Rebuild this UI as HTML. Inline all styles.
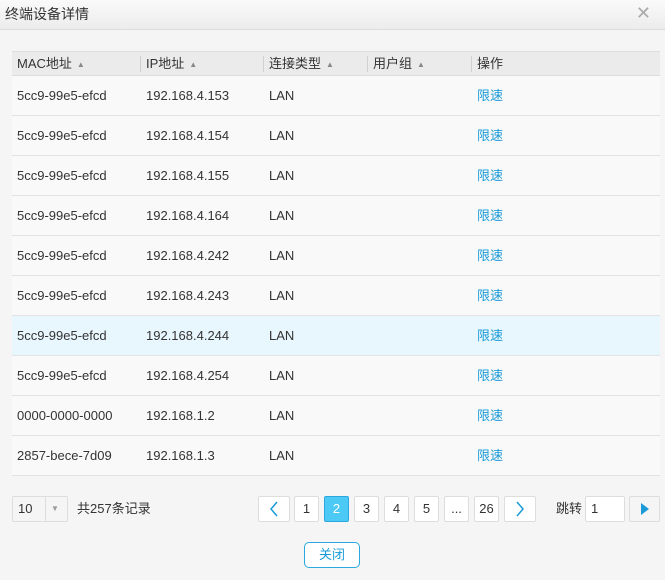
<!DOCTYPE html>
<html><head><meta charset="utf-8"><style>
*{box-sizing:border-box;margin:0;padding:0}
body{width:665px;height:580px;background:#f5f5f5;font-family:"Liberation Sans","Noto Sans CJK SC",sans-serif;font-size:13px;color:#333;position:relative;overflow:hidden}
.hd{position:absolute;left:0;top:0;width:665px;height:30px;background:linear-gradient(#fafafa,#ececec);border-bottom:1px solid #ddd}
.hd .t{position:absolute;left:5px;top:0;line-height:28px;font-size:14px;color:#333}
.hd .x{position:absolute;right:14px;top:0;line-height:26px;font-size:18px;color:#aaa}
.tbl{position:absolute;left:12px;top:51px;width:648px}
.th{height:25px;background:#ebebeb;border-top:1px solid #ddd;border-bottom:1px solid #ddd;position:relative}
.th span{position:absolute;top:0;line-height:23px;font-size:13px}
.th i{position:absolute;top:4px;width:1px;height:16px;background:#d0d0d0}
.tri{font-size:8px;color:#888;margin-left:5px;vertical-align:1px;font-weight:normal}
.r{height:40px;background:#f9f9f9;border-bottom:1px solid #e3e3e3;position:relative}
.r.h{background:#e8f6fd}
.r span,.r a{position:absolute;top:0;line-height:39px}
.r a{left:465px;color:#1a9bd7;text-decoration:none}
.b{position:absolute;top:496px;height:26px;border:1px solid #ddd;background:#fff;border-radius:2px;text-align:center;line-height:24px;font-size:13px;color:#333}
.b svg{position:absolute;left:50%;top:50%;transform:translate(-50%,-50%)}
.lbl{position:absolute;top:496px;line-height:26px}
</style></head><body>
<div class="hd"><div class="t">终端设备详情</div><div class="x">✕</div></div>
<div class="tbl">
<div class="th">
<span style="left:5px">MAC地址<b class="tri">▲</b></span><i style="left:128px"></i>
<span style="left:134px">IP地址<b class="tri">▲</b></span><i style="left:251px"></i>
<span style="left:257px">连接类型<b class="tri">▲</b></span><i style="left:355px"></i>
<span style="left:361px">用户组<b class="tri">▲</b></span><i style="left:459px"></i>
<span style="left:465px">操作</span>
</div>
<div class="r"><span style="left:5px">5cc9-99e5-efcd</span><span style="left:134px">192.168.4.153</span><span style="left:257px">LAN</span><a>限速</a></div>
<div class="r"><span style="left:5px">5cc9-99e5-efcd</span><span style="left:134px">192.168.4.154</span><span style="left:257px">LAN</span><a>限速</a></div>
<div class="r"><span style="left:5px">5cc9-99e5-efcd</span><span style="left:134px">192.168.4.155</span><span style="left:257px">LAN</span><a>限速</a></div>
<div class="r"><span style="left:5px">5cc9-99e5-efcd</span><span style="left:134px">192.168.4.164</span><span style="left:257px">LAN</span><a>限速</a></div>
<div class="r"><span style="left:5px">5cc9-99e5-efcd</span><span style="left:134px">192.168.4.242</span><span style="left:257px">LAN</span><a>限速</a></div>
<div class="r"><span style="left:5px">5cc9-99e5-efcd</span><span style="left:134px">192.168.4.243</span><span style="left:257px">LAN</span><a>限速</a></div>
<div class="r h"><span style="left:5px">5cc9-99e5-efcd</span><span style="left:134px">192.168.4.244</span><span style="left:257px">LAN</span><a>限速</a></div>
<div class="r"><span style="left:5px">5cc9-99e5-efcd</span><span style="left:134px">192.168.4.254</span><span style="left:257px">LAN</span><a>限速</a></div>
<div class="r"><span style="left:5px">0000-0000-0000</span><span style="left:134px">192.168.1.2</span><span style="left:257px">LAN</span><a>限速</a></div>
<div class="r"><span style="left:5px">2857-bece-7d09</span><span style="left:134px">192.168.1.3</span><span style="left:257px">LAN</span><a>限速</a></div>
</div>
<div class="b" style="left:12px;width:56px;background:#f5f5f5;text-align:left;padding-left:5px">10<span style="position:absolute;left:32px;top:0;width:1px;height:24px;background:#ddd"></span><span style="position:absolute;left:38px;top:0;font-size:8px;color:#999">▼</span></div>
<div class="lbl" style="left:77px">共257条记录</div>
<div class="b" style="left:258px;width:32px"><svg width="10" height="16" viewBox="0 0 10 16"><path d="M8 1L2 8l6 7" fill="none" stroke="#1a9bd7" stroke-width="1.5"/></svg></div>
<div class="b" style="left:294px;width:25px">1</div>
<div class="b" style="left:324px;width:25px;background:#4cc9f5;border-color:#2aa8e0;color:#fff">2</div>
<div class="b" style="left:354px;width:25px">3</div>
<div class="b" style="left:384px;width:25px">4</div>
<div class="b" style="left:414px;width:25px">5</div>
<div class="b" style="left:444px;width:25px">...</div>
<div class="b" style="left:474px;width:25px">26</div>
<div class="b" style="left:504px;width:32px"><svg width="10" height="16" viewBox="0 0 10 16"><path d="M2 1l6 7-6 7" fill="none" stroke="#1a9bd7" stroke-width="1.5"/></svg></div>
<div class="lbl" style="left:556px">跳转</div>
<div class="b" style="left:585px;width:40px;text-align:left;padding-left:5px">1</div>
<div class="b" style="left:629px;width:31px;background:#f5f5f5"><svg width="8" height="12" viewBox="0 0 8 12"><path d="M0 0L8 6 0 12z" fill="#1a9bd7"/></svg></div>
<div style="position:absolute;left:304px;top:542px;width:56px;height:26px;border:1px solid #2aa8e0;border-radius:5px;background:#fff;color:#1a9bd7;text-align:center;line-height:24px">关闭</div>
</body></html>
